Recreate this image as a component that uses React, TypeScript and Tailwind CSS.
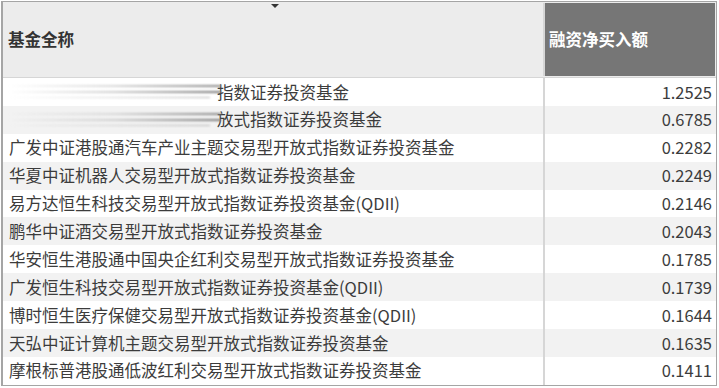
const rows = [
  { name: "指数证券投资基金", value: "1.2525", masked: true },
  { name: "放式指数证券投资基金", value: "0.6785", masked: true },
  { name: "广发中证港股通汽车产业主题交易型开放式指数证券投资基金", value: "0.2282" },
  { name: "华夏中证机器人交易型开放式指数证券投资基金", value: "0.2249" },
  { name: "易方达恒生科技交易型开放式指数证券投资基金(QDII)", value: "0.2146" },
  { name: "鹏华中证酒交易型开放式指数证券投资基金", value: "0.2043" },
  { name: "华安恒生港股通中国央企红利交易型开放式指数证券投资基金", value: "0.1785" },
  { name: "广发恒生科技交易型开放式指数证券投资基金(QDII)", value: "0.1739" },
  { name: "博时恒生医疗保健交易型开放式指数证券投资基金(QDII)", value: "0.1644" },
  { name: "天弘中证计算机主题交易型开放式指数证券投资基金", value: "0.1635" },
  { name: "摩根标普港股通低波红利交易型开放式指数证券投资基金", value: "0.1411" },
];

const font = { fontFamily: '"Noto Sans CJK SC", "Noto Sans", sans-serif' };

// smeared redaction over the start of the name
const Smear = () => (
  <div className="flex h-full w-[212px] shrink-0 flex-col justify-center gap-[4px] blur-[1px]">
    <div className="h-[2px] w-full bg-gradient-to-r from-transparent via-[#d8d8d8] to-[#8a8a8a]" />
    <div className="h-[2px] w-full bg-gradient-to-r from-transparent via-[#cfcfcf] to-[#7a7a7a]" />
    <div className="h-[1px] w-[95%] bg-gradient-to-r from-transparent to-[#b5b5b5]" />
  </div>
);

export default function App() {
  return (
    <div className="h-[388px] w-[719px] bg-white pl-px pt-px" style={font}>
      <div className="relative w-[716px] border border-l-2 border-[#a5a5a5] bg-white text-[16.5px] text-[#3c3c3c]">
        <div className="absolute left-[268px] top-[2px] h-0 w-0 border-x-[4px] border-t-[4px] border-x-transparent border-t-[#333]" />
        <div className="grid h-[76px] grid-cols-[540px_1fr] border-b border-[#d6d6d6] bg-[#ececec]">
          <div className="flex items-center pl-[5px] font-bold text-[#333]">基金全称</div>
          <div className="my-px mr-px flex items-center border-l-2 border-[#d6d6d6] bg-[#767676] pl-[4px] font-bold text-white">
            融资净买入额
          </div>
        </div>
        {rows.map((r, i) => (
          <div
            key={i}
            className={`grid h-[27.9px] grid-cols-[540px_1fr] ${i % 2 === 0 ? "bg-white" : "bg-[#f2f2f2]"}`}
          >
            <div className="flex items-center whitespace-nowrap pl-[6px]">
              {r.masked && <Smear />}
              <span className={r.masked ? "-ml-[4px]" : ""}>{r.name}</span>
            </div>
            <div className="flex items-center justify-end border-l-2 border-[#d6d6d6] pr-[4px]">
              {r.value}
            </div>
          </div>
        ))}
      </div>
    </div>
  );
}
